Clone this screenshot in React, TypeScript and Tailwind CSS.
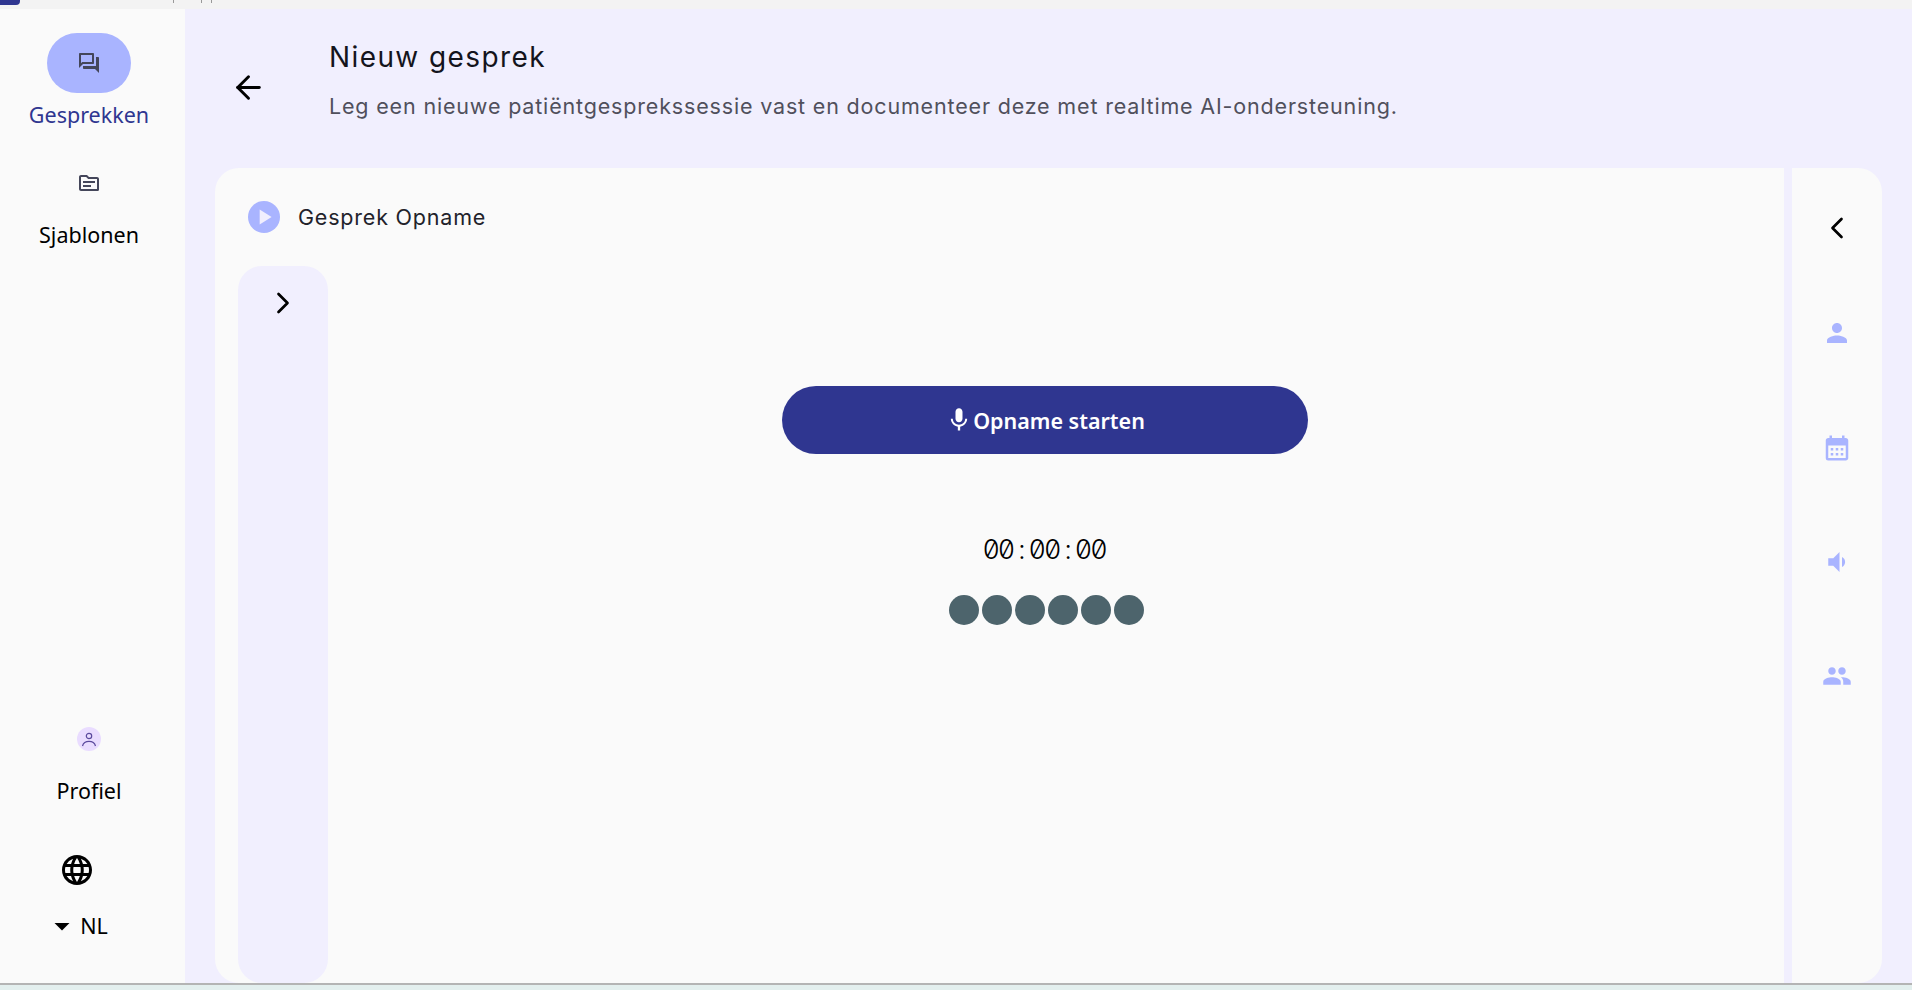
import React from 'react';
import { ArrowLeft, ChevronLeft, ChevronRight } from 'lucide-react';
import {
  MdOutlineForum,
  MdOutlineTopic,
  MdLanguage,
  MdArrowDropDown,
  MdMic,
  MdPlayArrow,
  MdPerson,
  MdCalendarMonth,
  MdVolumeDown,
  MdPeople,
} from 'react-icons/md';

const sideFont = "font-['Noto_Sans',sans-serif]";
const headFont = "font-['Inter',sans-serif]";

const Sidebar: React.FC = () => (
  <aside className={`w-[185px] shrink-0 bg-[#fafafa] pr-[7px] flex flex-col items-center ${sideFont}`}>
    <div className="mt-6 w-[84px] h-[60px] rounded-full bg-[#a9b4ff] flex items-center justify-center">
      <MdOutlineForum size={24} className="text-[#44465a]" />
    </div>
    <span className="mt-[7px] text-[21.5px] leading-[30px] text-[#2f3690]">Gesprekken</span>

    <MdOutlineTopic size={24} className="mt-[41px] text-[#44465a]" />
    <span className="mt-[25px] text-[21.5px] leading-[30px] text-black">Sjablonen</span>

    <div className="mt-auto w-6 h-6 rounded-full bg-[#e9dcff] flex items-center justify-center overflow-hidden">
      <svg width="18" height="18" viewBox="0 0 18 18" fill="none" stroke="#5b4a9e" strokeWidth="1.2">
        <circle cx="9" cy="6" r="2.7" />
        <path d="M2.5 16c.8-3 3.4-4.6 6.5-4.6s5.700 1.600 6.500 4.600" />
      </svg>
    </div>
    <span className="mt-[25px] text-[21.5px] leading-[30px] text-black">Profiel</span>

    <MdLanguage size={36} className="mt-[46px] mr-6 text-black" />
    <div className="mt-5 mb-[39px] mr-[26px] flex items-center text-[21.5px] leading-[30px] text-black">
      <MdArrowDropDown size={36} />
      <span>NL</span>
    </div>
  </aside>
);

const RightRail: React.FC = () => (
  <div className="w-[90px] shrink-0 flex flex-col items-center text-[#a9b4ff]">
    <ChevronLeft size={36} strokeWidth={1.8} className="mt-[42px] text-black" />
    <MdPerson size={30} className="mt-[72px]" />
    <MdCalendarMonth size={30} className="mt-[85px]" />
    <MdVolumeDown size={30} className="mt-[84px]" />
    <MdPeople size={30} className="mt-[84px]" />
  </div>
);

const timer = '00:00:00'.split('');

const App: React.FC = () => (
  <div className="h-[990px] w-full flex flex-col overflow-hidden bg-[#f1effe]">
    <div className="h-[9px] shrink-0 bg-[#f3f3f3] flex items-start">
      <div className="w-5 h-[5px] bg-[#2f3690] rounded-br" />
      <div className="ml-[153px] w-px h-[3px] bg-[#999]" />
      <div className="ml-[27px] w-px h-[3px] bg-[#999]" />
      <div className="ml-[9px] w-px h-[3px] bg-[#999]" />
    </div>

    <div className="flex-1 min-h-0 flex">
      <Sidebar />

      <main className="flex-1 min-w-0 flex flex-col">
        <header className={`h-[159px] shrink-0 flex ${headFont}`}>
          <div className="w-[144px] pl-[45px] pt-[60px] shrink-0">
            <ArrowLeft size={37} strokeWidth={1.9} className="text-black" />
          </div>
          <div className="pt-[27px]">
            <h1 className="text-[28px] leading-[42px] font-normal tracking-[1.4px] text-[#14141c]">Nieuw gesprek</h1>
            <p className="mt-[13px] text-[21.5px] leading-[30px] tracking-[0.83px] text-[#50505c]">
              Leg een nieuwe patiëntgesprekssessie vast en documenteer deze met realtime AI-ondersteuning.
            </p>
          </div>
        </header>

        <div className="flex-1 min-h-0 mx-[30px] rounded-[24px] bg-[#fafafa] flex overflow-hidden">
          <section className="flex-1 min-w-0 flex flex-col">
            <div className={`h-[98px] shrink-0 pl-[33px] pt-[33px] flex items-start ${headFont}`}>
              <div className="w-8 h-8 rounded-full bg-[#a9b4ff] flex items-center justify-center">
                <MdPlayArrow size={26} className="text-[#f1effe]" />
              </div>
              <span className="ml-[18px] text-[21.5px] leading-[32px] tracking-[0.8px] text-[#22222a]">Gesprek Opname</span>
            </div>

            <div className="flex-1 min-h-0 flex">
              <div className="ml-[23px] w-[90px] shrink-0 rounded-[24px] bg-[#f1effe] flex justify-center pt-[19px]">
                <ChevronRight size={36} strokeWidth={1.8} className="text-black" />
              </div>

              <div className="flex-1 min-w-0 pr-5 pt-[120px] flex flex-col items-center">
                <button className={`mr-[2px] w-[526px] h-[68px] pt-[3px] rounded-full bg-[#2f3690] text-white flex items-center justify-center text-[21.5px] font-semibold ${sideFont}`}>
                  <MdMic size={28} className="-mt-[3px]" />
                  Opname starten
                </button>
                <div className="mt-[78px] mr-[2px] flex text-[27px] leading-[36px] font-light text-black slashed-zero tabular-nums font-['Inter',monospace]">
                  {timer.map((c, i) => (
                    <span key={i} className="w-[15.4px] flex justify-center">{c}</span>
                  ))}
                </div>
                <div className="mt-[27px] flex gap-[3px]">
                  {[0, 1, 2, 3, 4, 5].map((i) => (
                    <div key={i} className="w-[30px] h-[30px] rounded-full bg-[#4d646c]" />
                  ))}
                </div>
              </div>
            </div>
          </section>

          <div className="w-2 shrink-0 bg-[#f1effe]" />
          <RightRail />
        </div>
      </main>
    </div>

    <div className="h-[7px] shrink-0 border-t-2 border-[#b4b4b4] bg-[#e3efee]" />
  </div>
);

export default App;
